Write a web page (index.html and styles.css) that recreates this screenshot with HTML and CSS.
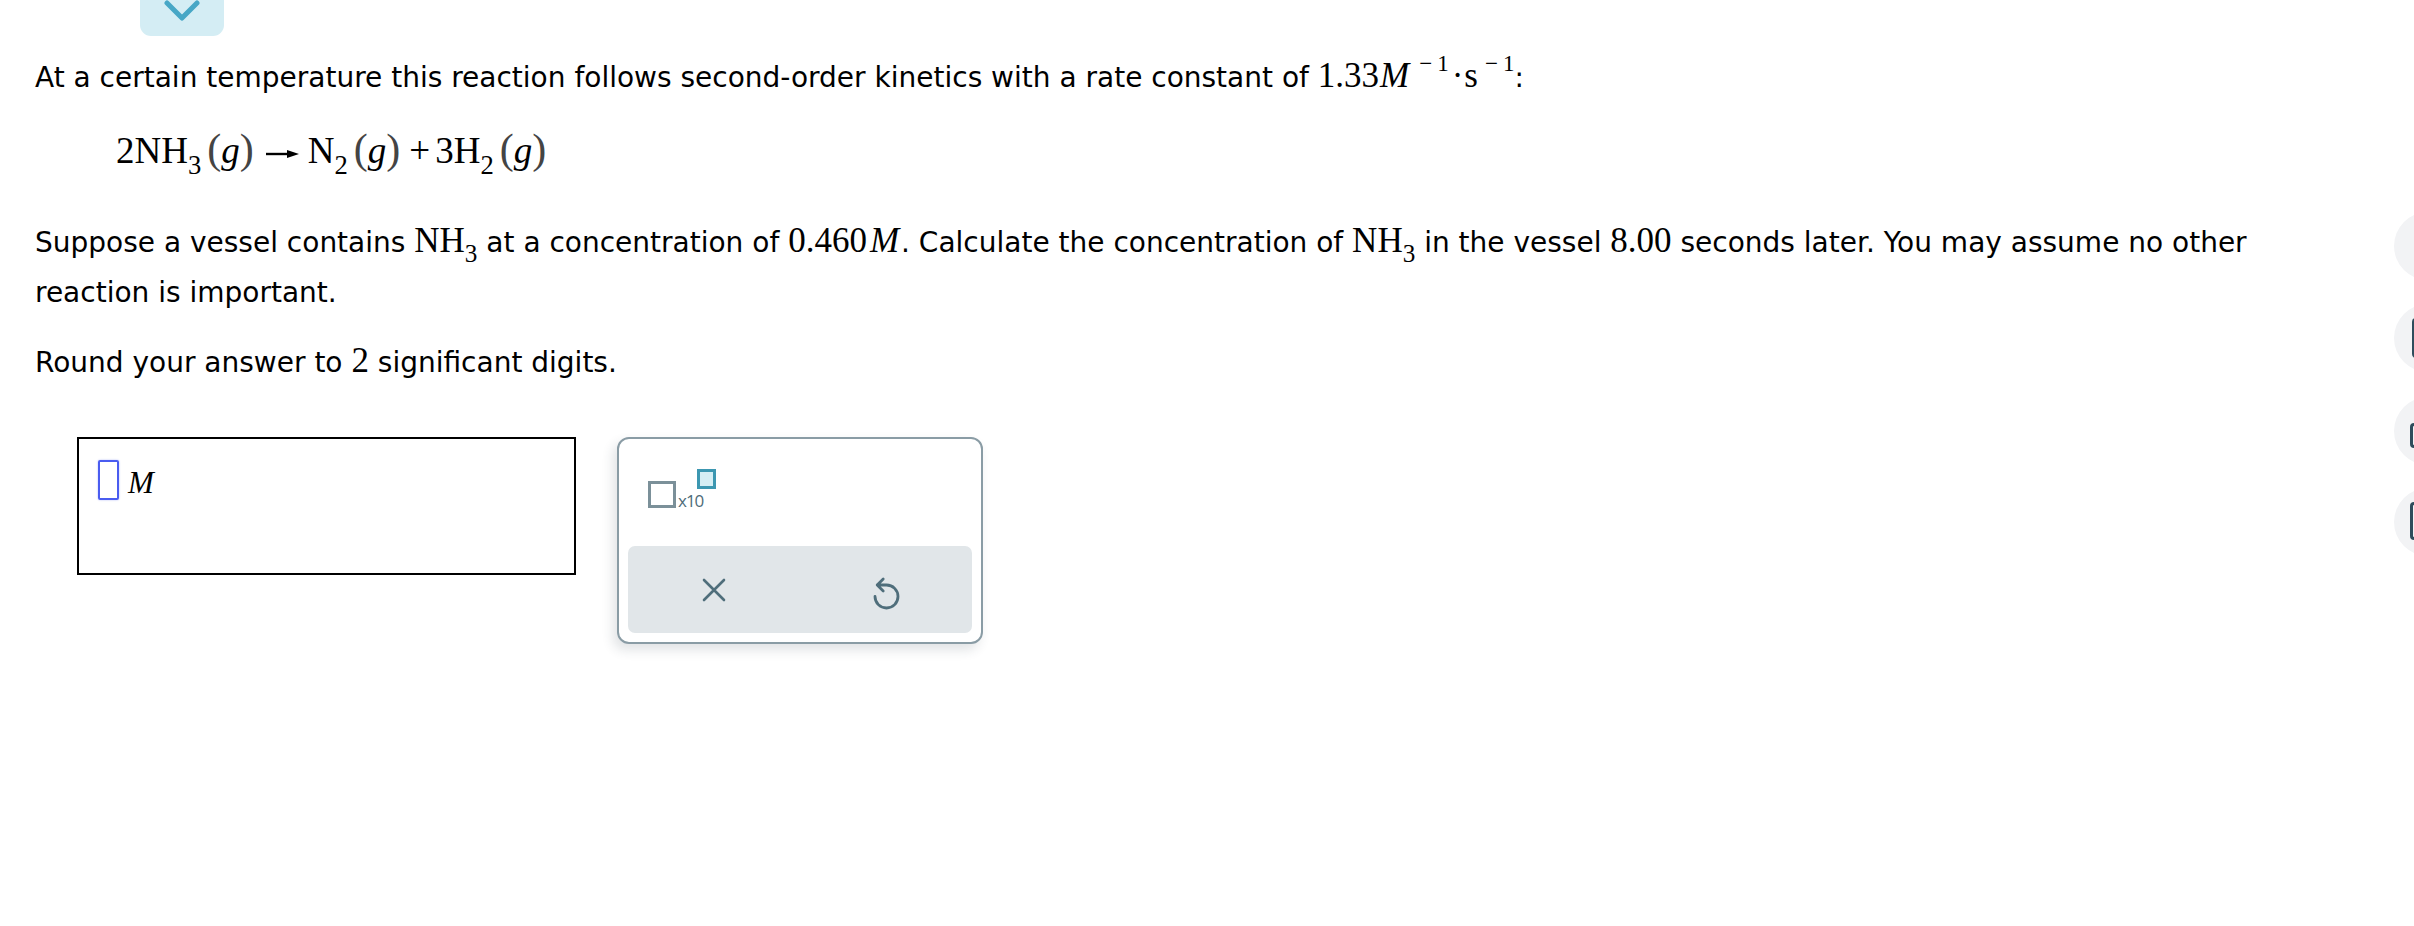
FILE: index.html
```html
<!DOCTYPE html>
<html>
<head>
<meta charset="utf-8">
<link rel="stylesheet" href="styles.css">
</head>
<body>
<div class="page">
  <div class="tab">
    <svg class="chev" viewBox="0 0 40 24"><path d="M5 3 L20 18 L35 3" /></svg>
  </div>
  <div class="content">
    <p class="l1">At a certain temperature this reaction follows second-order kinetics with a rate constant of <span class="m">1.33<i class="mi">M</i><sup class="up"><span class="neg">−</span>1</sup><span class="dot">·</span>s<sup class="up"><span class="neg">−</span>1</sup></span>:</p>
    <div class="eq"><span>2NH<sub>3</sub></span><span class="g"><span class="pr">(</span><i>g</i><span class="pr">)</span></span><svg class="arr" viewBox="0 0 33 10"><path class="arr-line" d="M0 5 H24" /><path class="arr-head" d="M21 1 L33 5 L21 9 Z" /></svg><span>N<sub>2</sub></span><span class="g"><span class="pr">(</span><i>g</i><span class="pr">)</span></span><span class="plus">+</span><span>3H<sub>2</sub></span><span class="g"><span class="pr">(</span><i>g</i><span class="pr">)</span></span></div>
    <p class="p2">Suppose a vessel contains <span class="m">NH<sub>3</sub></span> at a concentration of <span class="m">0.460<i class="mi mw">M</i></span>. Calculate the concentration of <span class="m">NH<sub>3</sub></span> in the vessel <span class="m">8.00</span> seconds later. You may assume no other reaction is important.</p>
    <p class="p3">Round your answer to <span class="m">2</span> significant digits.</p>
    <div class="answer-row">
      <div class="answer">
        <span class="slot"></span><i class="unit">M</i>
      </div>
      <div class="pad">
        <div class="pad-top">
          <span class="sci">
            <span class="sci-base"></span><span class="sci-x">x10</span><span class="sci-exp"></span>
          </span>
        </div>
        <div class="pad-actions">
          <span class="act">
            <svg class="ico-x" viewBox="0 0 24 24"><path d="M2 2 L22 22 M22 2 L2 22" /></svg>
          </span>
          <span class="act">
            <svg class="ico-undo" viewBox="0 0 27 33"><path d="M10.2 2 L4.2 8 L10.2 14 M4.2 8 H13.5 A11.5 11.5 0 1 1 2 19.5" /></svg>
          </span>
        </div>
      </div>
    </div>
  </div>
  <div class="side">
    <span class="circ c1"></span>
    <span class="circ c2"><span class="sico s2"></span></span>
    <span class="circ c3"><span class="sico s3"></span></span>
    <span class="circ c4"><span class="sico s4"></span></span>
  </div>
</div>
</body>
</html>
```
FILE: styles.css
```css
html, body {
  margin: 0;
  padding: 0;
  background: #ffffff;
}
body {
  font-family: "DejaVu Sans", Verdana, sans-serif;
  font-size: 28px;
  color: #000000;
}
.page {
  position: relative;
  width: 2414px;
  height: 926px;
  overflow: hidden;
}
.tab {
  margin-left: 140px;
  width: 84px;
  height: 36px;
  background: #d4edf4;
  border-radius: 0 0 11px 11px;
  display: flex;
  justify-content: center;
  align-items: flex-start;
}
.chev {
  width: 40px;
  height: 24px;
}
.chev path {
  fill: none;
  stroke: #47a7c6;
  stroke-width: 5;
  stroke-linecap: round;
  stroke-linejoin: round;
}
.content {
  padding-left: 35px;
  width: 2280px;
}
p {
  margin: 0;
  line-height: 50px;
}
.l1 {
  margin-top: 17px;
}
.m {
  font-family: "Liberation Serif", "Times New Roman", serif;
  font-size: 35px;
  line-height: 1;
}
.mi {
  font-style: italic;
  padding-right: 3px;
  padding-left: 1px;
}
.mw {
  padding-left: 3px;
  padding-right: 2px;
}
.up {
  font-size: 23px;
  line-height: 0;
  vertical-align: 16px;
  padding-left: 7px;
}
.neg {
  padding-right: 5px;
}
.dot {
  padding: 0 1px 0 3px;
}
sub {
  font-size: 0.72em;
  line-height: 0;
  vertical-align: -0.4em;
}
.eq {
  margin: 23px 0 0 81px;
  font-family: "Liberation Serif", "Times New Roman", serif;
  font-size: 37px;
  line-height: 50px;
}
.eq .g {
  margin-left: 6px;
}
.eq .pr {
  font-size: 42px;
  line-height: 1;
  color: #444444;
}
.arr {
  width: 33px;
  height: 10px;
  margin: 0 9px 0 12px;
  vertical-align: 4px;
}
.arr-line {
  stroke: #000000;
  stroke-width: 2.4;
  fill: none;
}
.arr-head {
  fill: #000000;
}
.eq .plus {
  margin: 0 5px 0 9px;
}
.p2 {
  margin-top: 42px;
}
.p3 {
  margin-top: 20px;
}
.answer-row {
  display: flex;
  align-items: flex-start;
  gap: 41px;
  margin-top: 49px;
  margin-left: 42px;
}
.answer {
  box-sizing: border-box;
  width: 499px;
  height: 138px;
  border: 2px solid #000000;
  display: flex;
  align-items: flex-start;
  padding: 21px 0 0 19px;
}
.slot {
  box-sizing: border-box;
  width: 21px;
  height: 40px;
  border: 2px solid #4a5cf0;
  border-radius: 2px;
  box-shadow: 0 0 2px rgba(74, 92, 240, 0.45);
}
.unit {
  font-family: "Liberation Serif", "Times New Roman", serif;
  font-size: 31px;
  line-height: 30px;
  margin: 8px 0 0 9px;
}
.pad {
  box-sizing: border-box;
  width: 366px;
  height: 207px;
  border: 2px solid #8a9ca5;
  border-radius: 12px;
  background: #ffffff;
  box-shadow: -4px 6px 12px rgba(40, 60, 70, 0.14);
  display: flex;
  flex-direction: column;
  padding: 0 9px 9px 9px;
}
.pad-top {
  flex: 1;
  padding: 30px 0 0 20px;
}
.sci {
  position: relative;
  display: inline-flex;
  align-items: flex-end;
  padding-top: 12px;
}
.sci-base {
  box-sizing: border-box;
  width: 28px;
  height: 27px;
  border: 3px solid #7b9099;
}
.sci-x {
  font-family: "Open Sans", "DejaVu Sans", sans-serif;
  font-size: 17px;
  line-height: 14px;
  color: #4e6b78;
  letter-spacing: -1px;
  margin-left: 2px;
}
.sci-exp {
  box-sizing: border-box;
  width: 19px;
  height: 20px;
  border: 3px solid #3c97b1;
  background: #d5eef4;
  align-self: flex-start;
  margin-top: -12px;
  margin-left: -6px;
}
.pad-actions {
  height: 87px;
  background: #e1e6e9;
  border-radius: 7px;
  display: flex;
}
.act {
  flex: 1;
  display: flex;
  align-items: center;
  justify-content: center;
}
.ico-x {
  width: 24px;
  height: 24px;
}
.ico-x path {
  fill: none;
  stroke: #4f6e7b;
  stroke-width: 2.6;
  stroke-linecap: round;
}
.ico-undo {
  width: 27px;
  height: 33px;
  margin-top: 8px;
}
.ico-undo path {
  fill: none;
  stroke: #4f6e7b;
  stroke-width: 2.8;
  stroke-linecap: round;
  stroke-linejoin: round;
}
.circ {
  position: absolute;
  left: 2394px;
  width: 68px;
  height: 68px;
  border-radius: 50%;
  background: #f2f3f5;
}
.c1 { top: 212px; }
.c2 { top: 304px; }
.c3 { top: 397px; }
.c4 { top: 488px; }
.sico {
  position: absolute;
  box-sizing: border-box;
  border: 3px solid #2e4d5c;
  border-radius: 4px;
  width: 30px;
}
.s2 { left: 18px; top: 14px; height: 40px; }
.s3 { left: 16px; top: 26px; height: 25px; }
.s4 { left: 16px; top: 14px; height: 38px; }
```
